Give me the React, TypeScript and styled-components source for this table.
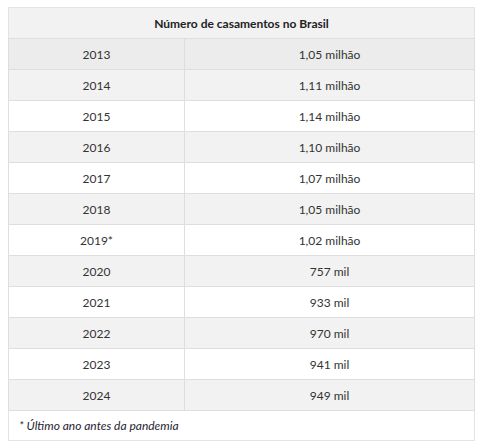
import styled, { createGlobalStyle } from 'styled-components'

const Global = createGlobalStyle`
  body {
    margin: 0;
    background: #ffffff;
    font-family: Lato, "Open Sans", sans-serif;
  }
`

const Wrap = styled.div`
  padding: 7px 5px 0 8px;
`

const Table = styled.table`
  width: 467px;
  border-collapse: collapse;
  font-size: 12px;
  color: #333333;
  border: 1px solid #e3e3e3;
`

const HeadCell = styled.th`
  background: #f2f2f2;
  height: 30px;
  padding: 0;
  font-weight: 700;
  color: #222222;
  border-bottom: 1px solid #dedede;
`

const Row = styled.tr<{ $shade: string }>`
  background: ${p => p.$shade};
`

const Cell = styled.td<{ $w?: number }>`
  height: 30px;
  padding: 0;
  text-align: center;
  border: 1px solid #dedede;
  ${p => p.$w ? `width: ${p.$w}px;` : ''}
`

const Note = styled.td`
  height: 29px;
  padding: 0 0 0 10px;
  font-style: italic;
  color: #1f2433;
  background: #ffffff;
  border-top: 1px solid #dedede;
`

const data: [string, string][] = [
  ['2013', '1,05 milhão'],
  ['2014', '1,11 milhão'],
  ['2015', '1,14 milhão'],
  ['2016', '1,10 milhão'],
  ['2017', '1,07 milhão'],
  ['2018', '1,05 milhão'],
  ['2019*', '1,02 milhão'],
  ['2020', '757 mil'],
  ['2021', '933 mil'],
  ['2022', '970 mil'],
  ['2023', '941 mil'],
  ['2024', '949 mil'],
]

const shadeFor = (i: number) => {
  if (i === 0) return '#ececec'
  return i % 2 === 1 ? '#f2f2f2' : '#ffffff'
}

export default function App() {
  return (
    <>
      <Global />
      <Wrap>
        <Table>
          <thead>
            <tr>
              <HeadCell colSpan={2}>Número de casamentos no Brasil</HeadCell>
            </tr>
          </thead>
          <tbody>
            {data.map(([year, value], i) => (
              <Row key={year} $shade={shadeFor(i)}>
                <Cell $w={175}>{year}</Cell>
                <Cell>{value}</Cell>
              </Row>
            ))}
            <tr>
              <Note colSpan={2}>* Último ano antes da pandemia</Note>
            </tr>
          </tbody>
        </Table>
      </Wrap>
    </>
  )
}
